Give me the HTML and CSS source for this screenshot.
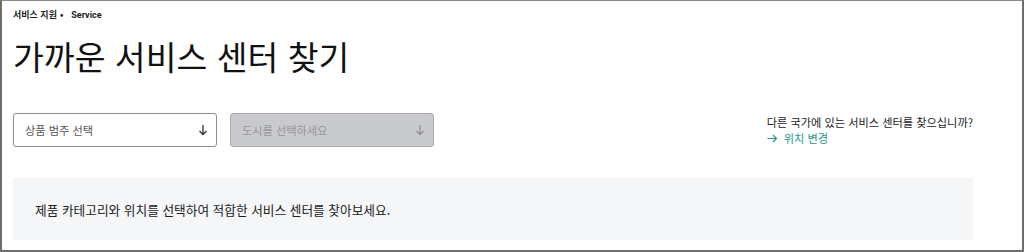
FILE: index.html
```html
<!DOCTYPE html>
<html lang="ko">
<head>
<meta charset="utf-8">
<link rel="stylesheet" href="styles.css">
</head>
<body>
<div class="frame">
  <div class="page">
    <nav class="crumb"><span>서비스 지원</span><span class="dot">•</span><span class="en">Service</span></nav>
    <h1 class="title">가까운 서비스 센터 찾기</h1>
    <div class="filters">
      <div class="select">
        <span>상품 범주 선택</span>
        <svg class="arrow" width="10" height="12" viewBox="0 0 10 12"><path d="M5 1v9.5M1.5 7l3.5 3.5L8.5 7" fill="none" stroke="currentColor" stroke-width="1.3"/></svg>
      </div>
      <div class="select disabled">
        <span>도시를 선택하세요</span>
        <svg class="arrow" width="10" height="12" viewBox="0 0 10 12"><path d="M5 1v9.5M1.5 7l3.5 3.5L8.5 7" fill="none" stroke="currentColor" stroke-width="1.3"/></svg>
      </div>
      <div class="other">
        <p>다른 국가에 있는 서비스 센터를 찾으십니까?</p>
        <a class="link" href="#"><svg width="11" height="9" viewBox="0 0 11 9"><path d="M0.5 4.5h9M6 1l3.5 3.5L6 8" fill="none" stroke="currentColor" stroke-width="1.2"/></svg><span>위치 변경</span></a>
      </div>
    </div>
    <div class="notice">제품 카테고리와 위치를 선택하여 적합한 서비스 센터를 찾아보세요.</div>
  </div>
</div>
</body>
</html>
```

FILE: styles.css
```css
* { box-sizing: border-box; }
html, body { margin: 0; padding: 0; background: #fff; }
body {
  font-family: "Noto Sans CJK KR", "Noto Sans", sans-serif;
  color: #1a1a1a;
}
.frame {
  width: 1024px;
  height: 252px;
  border: 2px solid #6e6e6e;
  border-top: 1px solid #8a8a8a;
  overflow: hidden;
}
.page {
  width: 960px;
  margin-left: 11px;
  display: flex;
  flex-direction: column;
}
.crumb {
  margin-top: 8px;
  font-size: 9px;
  font-weight: 700;
  line-height: 12px;
  display: flex;
  gap: 3px;
  color: #222;
}
.crumb .dot { margin-right: 5px; }
.crumb .en { font-family: "Roboto", "Liberation Sans", sans-serif; }
.title {
  margin: 13px 0 0;
  font-size: 33.5px;
  font-weight: 400;
  line-height: 44px;
  color: #111;
}
.filters {
  margin-top: 35px;
  display: flex;
  align-items: flex-start;
  gap: 13px;
}
.select {
  width: 204px;
  height: 34px;
  border: 1px solid #8d8d8d;
  border-radius: 3px;
  display: flex;
  align-items: center;
  justify-content: space-between;
  padding: 0 8px 0 11px;
  font-size: 11.2px;
  color: #555;
  background: #fff;
}
.select .arrow { color: #333; }
.select.disabled {
  background: #c9cacd;
  border-color: #a9aaad;
  color: #95969a;
}
.select.disabled .arrow { color: #8f9094; }
.other {
  margin-left: auto;
  padding-top: 1px;
  font-size: 11.2px;
  line-height: 16px;
  color: #222;
}
.other p { margin: 0; }
.link {
  display: flex;
  align-items: center;
  gap: 6px;
  color: #2a9890;
  text-decoration: none;
  font-weight: 400;
}
.notice {
  margin-top: 31px;
  height: 62px;
  background: #f5f6f8;
  display: flex;
  align-items: center;
  padding: 0 22px;
  font-size: 12.7px;
  color: #222;
}
```
